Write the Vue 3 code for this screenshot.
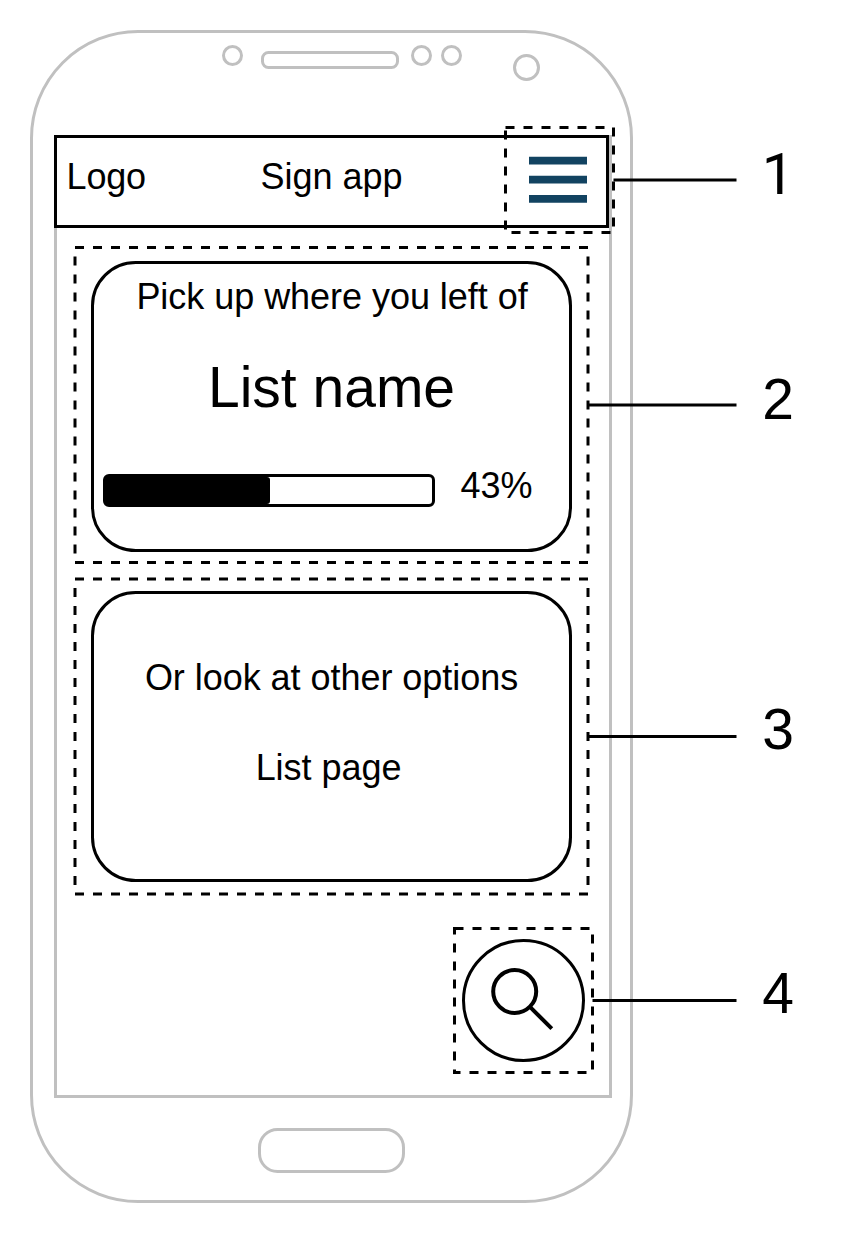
<script setup>
const progress = 43
const frames = [
  { x: 505.5, y: 127.5, w: 108, h: 105 },
  { x: 75, y: 247.5, w: 513, h: 315 },
  { x: 75, y: 579, w: 513, h: 315 },
  { x: 454.5, y: 928.5, w: 138, h: 144 },
]
const callouts = [
  { n: 1, from: 613.5, y: 180, baseline: 194 },
  { n: 2, from: 588, y: 405, baseline: 419 },
  { n: 3, from: 588, y: 736.5, baseline: 749 },
  { n: 4, from: 592.5, y: 1000.5, baseline: 1013 },
]
</script>

<template>
  <main class="board">
    <section class="phone">
      <div class="sensors">
        <i class="dot"></i>
        <i class="speaker"></i>
        <i class="dot second"></i>
        <i class="dot third"></i>
        <i class="camera"></i>
      </div>

      <div class="screen">
        <header class="bar">
          <span class="logo">Logo</span>
          <span class="title">Sign app</span>
          <svg class="menu" width="58" height="47" viewBox="0 0 58 47">
            <path d="M0 .7h58v7.8H0zM0 19.8h58v7.8H0zM0 38.9h58v7.8H0z" fill="#124361" />
          </svg>
        </header>

        <article class="card resume">
          <p class="line">Pick up where you left of</p>
          <h1 class="name">List name</h1>
          <div class="progress">
            <div class="track"><div class="fill"></div></div>
            <span>{{ progress }}%</span>
          </div>
        </article>

        <article class="card other">
          <p class="line">Or look at other options</p>
          <p class="line page">List page</p>
        </article>

        <button class="search" aria-label="Search">
          <svg width="117" height="117" viewBox="465 942 117 117" fill="none" stroke="#000" stroke-width="4">
            <circle cx="514.7" cy="991.5" r="21.5" />
            <path d="M530.2 1007.2L551.8 1028.6" />
          </svg>
        </button>
      </div>

      <div class="home"></div>
    </section>

    <svg class="notes" width="855" height="1233" viewBox="0 0 855 1233">
      <g fill="none" stroke="#000" stroke-width="3">
        <path
          v-for="f in frames"
          :key="f.y"
          :d="`M${f.x} ${f.y}h${f.w}v${f.h}h${-f.w}z`"
          stroke-dasharray="9 9"
        />
        <path v-for="c in callouts" :key="c.n" :d="`M${c.from} ${c.y}H736.5`" />
      </g>
      <text
        v-for="c in callouts"
        :key="c.n"
        :class="{ plain: c.n === 1 }"
        x="778"
        :y="c.baseline"
      >{{ c.n }}</text>
    </svg>
  </main>
</template>

<style>
body {
  margin: 0;
  background: #fff;
}
</style>

<style scoped>
* {
  box-sizing: border-box;
}
.board {
  position: relative;
  width: 855px;
  height: 1233px;
  padding: 30px;
  overflow: hidden;
  background: #fff;
  color: #000;
  font: 36px/40px "Liberation Sans", Arial, Helvetica, sans-serif;
}
.phone {
  display: flex;
  flex-direction: column;
  width: 603px;
  height: 1173px;
  border: 3px solid #c0c0c0;
  border-radius: 108px;
}
.sensors {
  display: flex;
  align-items: flex-start;
  height: 102px;
  padding: 12px 0 0 189px;
}
.dot {
  width: 21px;
  height: 21px;
  border: 3px solid #c0c0c0;
  border-radius: 50%;
}
.speaker {
  width: 138px;
  height: 18px;
  margin: 6px 0 0 18px;
  border: 3px solid #c0c0c0;
  border-radius: 7.5px;
}
.second {
  margin-left: 12px;
}
.third {
  margin-left: 9px;
}
.camera {
  width: 27px;
  height: 27px;
  margin: 9px 0 0 51px;
  border: 3px solid #c0c0c0;
  border-radius: 50%;
}
.screen {
  display: flex;
  flex-direction: column;
  width: 558px;
  height: 963px;
  margin-left: 21px;
  border: 3px solid #c0c0c0;
}
.bar {
  display: grid;
  grid-template-columns: 1fr auto 1fr;
  align-items: center;
  flex: none;
  width: 555px;
  height: 93px;
  margin: -3px 0 0 -3px;
  padding: 0 19px 0 9px;
  border: 3px solid #000;
}
.logo,
.title {
  margin-bottom: 10px;
}
.logo {
  margin-left: 0.6px;
  letter-spacing: -0.2px;
}
.title {
  margin-left: 10px;
}
.menu {
  display: block;
  justify-self: end;
  margin-bottom: 5px;
}
.card {
  display: flex;
  flex-direction: column;
  align-items: center;
  flex: none;
  width: 481px;
  height: 291px;
  margin-left: 34px;
  border: 3px solid #000;
  border-radius: 44.7px;
}
.resume {
  margin-top: 33px;
}
.other {
  margin-top: 39px;
  padding-top: 64px;
}
.line,
.name {
  margin: 0;
}
.line {
  letter-spacing: -0.04px;
}
.resume .line {
  margin: 13px 0 0 1px;
}
.name {
  margin-top: 37px;
  font-size: 57px;
  font-weight: 400;
  line-height: 66px;
}
.page {
  margin: 50px 6px 0 0;
}
.progress {
  display: flex;
  align-self: stretch;
  margin: 46px 0 0 9px;
}
.track {
  width: 332px;
  height: 33px;
  margin: 8px 25.5px 0 0;
  border: 3px solid #000;
  border-radius: 6px;
}
.fill {
  width: 164px;
  height: 27px;
  border-radius: 0 3px 3px 0;
  background: #000;
}
.search {
  flex: none;
  width: 123px;
  height: 123px;
  margin: 57px 0 0 405px;
  padding: 0;
  border: 3px solid #000;
  border-radius: 50%;
  background: none;
}
.search svg {
  display: block;
}
.home {
  width: 147px;
  height: 45px;
  margin: 30px 0 0 225px;
  border: 3px solid #c0c0c0;
  border-radius: 19.5px;
}
.notes {
  position: absolute;
  top: 0;
  left: 0;
  font-size: 57px;
  text-anchor: middle;
}
.plain {
  font-family: Roboto, "Liberation Sans", sans-serif;
  font-size: 58px;
}
</style>
